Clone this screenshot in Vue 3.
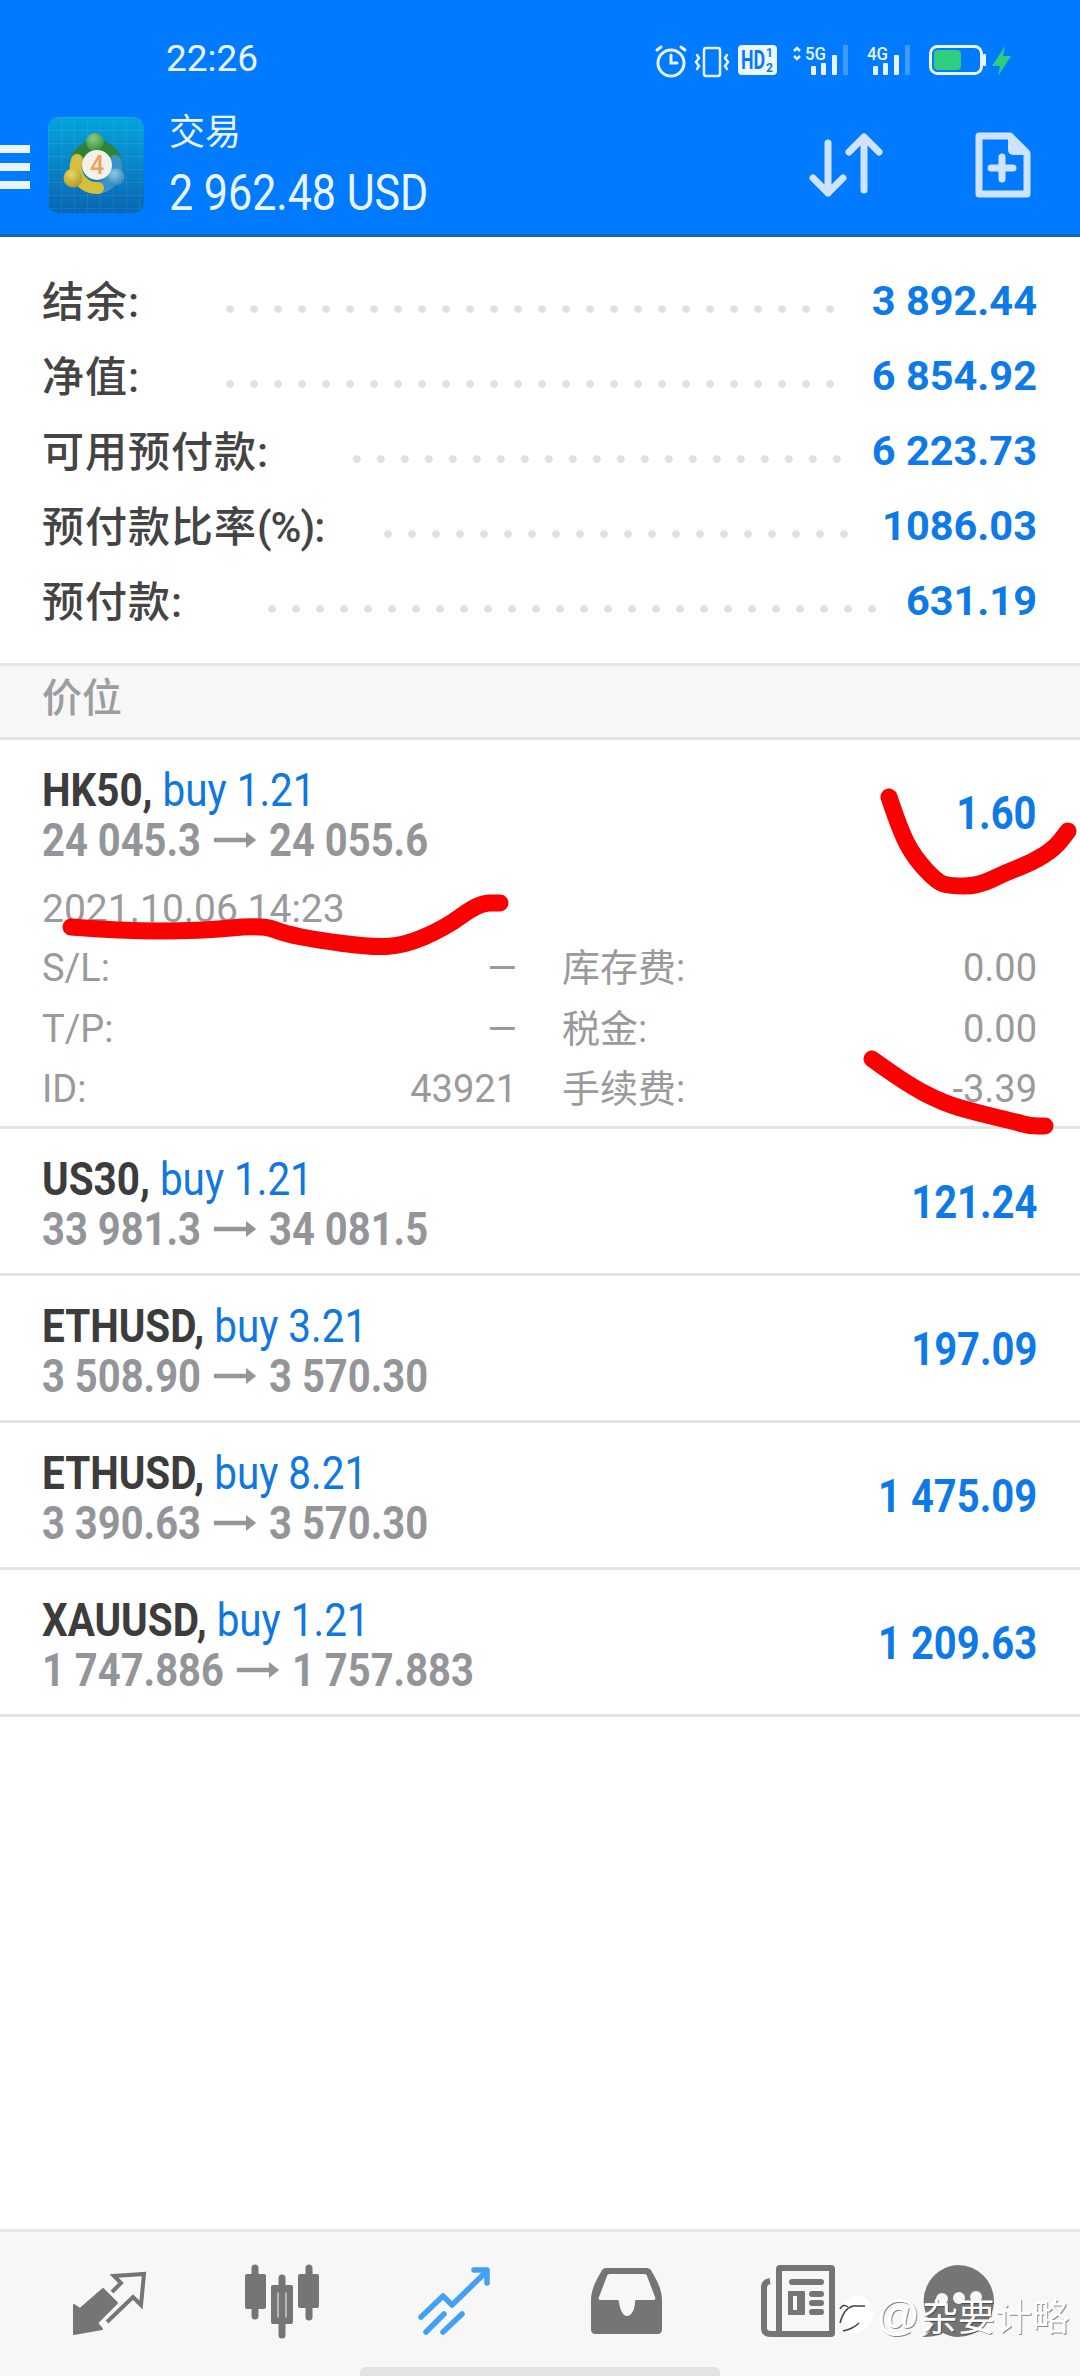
<template>
  <div class="page">
    <header class="head">
      <div class="status">
        <span class="time">22:26</span>
        <svg class="status-icons" width="370" height="50" viewBox="650 33 370 50">
          <!-- alarm -->
          <g fill="none" stroke="#e8f3ff" stroke-width="3" stroke-linecap="round">
            <circle cx="671" cy="62" r="13" />
            <path d="M671 54v8h6M657 49l4-3M685 49l-4-3" />
          </g>
          <!-- vibrate -->
          <g fill="none" stroke="#e8f3ff" stroke-width="2.5" stroke-linecap="round">
            <rect x="704" y="47" width="16" height="28" rx="2" />
            <path d="M697 54l2 3-3 4 3 4-2 3M727 54l-2 3 3 4-3 4 2 3" />
          </g>
          <!-- HD 1/2 -->
          <rect x="738" y="44" width="39" height="30" rx="4" fill="#eef6ff" />
          <text x="741" y="68" class="hd" textLength="24" lengthAdjust="spacingAndGlyphs">HD</text>
          <text x="766" y="56" class="hd-small">1</text>
          <text x="766" y="71" class="hd-small">2</text>
          <!-- 5G -->
          <path d="M794 50l3-3 3 3M794 55l3 3 3-3" fill="none" stroke="#e8f3ff" stroke-width="2.5" />
          <text x="805" y="59" class="net" textLength="21" lengthAdjust="spacingAndGlyphs">5G</text>
          <g fill="#e8f3ff">
            <rect x="811" y="65" width="5" height="9" rx="1" />
            <rect x="821" y="62" width="5" height="12" rx="1" />
            <rect x="832" y="54" width="5" height="20" rx="1" />
          </g>
          <rect x="843" y="44" width="5" height="30" rx="1" fill="#3f9bff" />
          <!-- 4G -->
          <text x="867" y="59" class="net" textLength="21" lengthAdjust="spacingAndGlyphs">4G</text>
          <g fill="#e8f3ff">
            <rect x="873" y="65" width="5" height="9" rx="1" />
            <rect x="883" y="62" width="5" height="12" rx="1" />
            <rect x="894" y="54" width="5" height="20" rx="1" />
          </g>
          <rect x="905" y="44" width="5" height="30" rx="1" fill="#3f9bff" />
          <!-- battery -->
          <rect x="930.5" y="45.5" width="51" height="27" rx="7" fill="none" stroke="#e8f3ff" stroke-width="3" />
          <rect x="934" y="49" width="27" height="20" rx="4" fill="#2fce7f" />
          <rect x="983" y="53" width="3" height="12" rx="1" fill="#e8f3ff" />
          <path d="M1005 45l-13 20h8l-2 10 13-20h-8z" fill="#2fce7f" />
        </svg>
      </div>
      <div class="appbar">
        <div class="burger"><i></i><i></i><i></i></div>
        <svg class="logo" width="96" height="96" viewBox="0 0 96 96">
          <defs>
            <linearGradient id="logoBg" x1="0" y1="0" x2="0" y2="1">
              <stop offset="0" stop-color="#04a4dc" />
              <stop offset="1" stop-color="#0a66b2" />
            </linearGradient>
            <pattern id="logoGrid" width="13" height="13" patternUnits="userSpaceOnUse">
              <path d="M13 0H0V13" fill="none" stroke="#ffffff" stroke-opacity=".13" />
            </pattern>
            <radialGradient id="headGreen" cx=".4" cy=".3" r=".8">
              <stop offset="0" stop-color="#8ccb7c" />
              <stop offset="1" stop-color="#2f8a3c" />
            </radialGradient>
            <radialGradient id="headYellow" cx=".4" cy=".3" r=".8">
              <stop offset="0" stop-color="#e9d765" />
              <stop offset="1" stop-color="#a8931f" />
            </radialGradient>
            <radialGradient id="headBlue" cx=".4" cy=".3" r=".8">
              <stop offset="0" stop-color="#8cc8e6" />
              <stop offset="1" stop-color="#2a7fb4" />
            </radialGradient>
          </defs>
          <rect width="96" height="96" rx="10" fill="url(#logoBg)" />
          <rect width="96" height="96" rx="10" fill="url(#logoGrid)" />
          <g fill="none" stroke-width="12" stroke-linecap="round">
            <path d="M67 41A21 21 0 0 0 29 41" stroke="#2f8238" />
            <path d="M67 44A21 21 0 0 1 45 71" stroke="#3a93c6" />
            <path d="M29 43A21 21 0 0 0 50 71" stroke="#d5c03c" />
          </g>
          <circle cx="47" cy="25" r="9" fill="url(#headGreen)" />
          <circle cx="25" cy="61" r="9.500" fill="url(#headYellow)" />
          <circle cx="68" cy="60" r="8.500" fill="url(#headBlue)" />
          <circle cx="49" cy="48" r="15" fill="#f4f1ea" />
          <text x="49" y="57" class="logo-four">4</text>
        </svg>
        <div class="account">
          <div class="account-title">交易</div>
          <div class="account-sum">2 962.48 USD</div>
        </div>
        <svg class="actions" width="240" height="80" viewBox="800 125 240 80">
          <g fill="none" stroke="#cfe3ff" stroke-width="7" stroke-linecap="round" stroke-linejoin="round">
            <path d="M828 143v50M813 178l15 15 15-15" />
            <path d="M864 190v-53M849 152l15-15 15 15" />
            <path d="M979 136h31l17 17v41h-48z" />
            <path d="M1002 157v22M991 168h22" />
          </g>
          <path d="M1008 136l19 19h-14a5 5 0 0 1-5-5z" fill="#cfe3ff" />
        </svg>
      </div>
    </header>

    <section class="summary">
      <div v-for="row in summary" :key="row.label" class="sum-row">
        <span class="sum-label" :style="{ width: row.labelWidth + 'px' }">{{ row.label }}<span v-if="row.unit" class="sum-unit">{{ row.unit }}</span></span>
        <span class="dots" :style="{ width: row.dots * 24 + 'px' }"></span>
        <span class="sum-value">{{ row.value }}</span>
      </div>
    </section>

    <div class="band">价位</div>

    <section class="positions">
      <div v-for="(p, i) in positions" :key="i" class="pos">
        <div class="pos-main">
          <div class="pos-text">
            <div class="pos-title"><b>{{ p.symbol }},</b> <span class="buy">buy {{ p.lots }}</span></div>
            <div class="pos-price">
              <span>{{ p.from }}</span>
              <svg class="arrow" width="50" height="20" viewBox="0 0 50 20">
                <path d="M0 10h40" stroke="#939598" stroke-width="4.500" />
                <path d="M38 2l12 8-12 8z" fill="#939598" />
              </svg>
              <span>{{ p.to }}</span>
            </div>
          </div>
          <div class="pos-profit">{{ p.profit }}</div>
        </div>
        <div v-if="p.open" class="pos-detail">
          <div class="pos-date">{{ p.date }}</div>
          <div class="detail-grid">
            <div v-for="d in p.details" :key="d[0]" class="detail-cell">
              <span>{{ d[0] }}</span><span>{{ d[1] }}</span>
            </div>
          </div>
        </div>
      </div>
    </section>

    <nav class="tabs">
      <div class="tab">
        <svg width="80" height="80" viewBox="0 0 80 80">
          <path d="M4 73V44l6 4 23-20 14 14-20 20 5 6z" fill="#757575" stroke="#757575" stroke-width="2" stroke-linejoin="round" />
          <path d="M42 31l9-9-7-7 30-2-3 31-8-8-26 25" fill="none" stroke="#757575" stroke-width="4" />
        </svg>
      </div>
      <div class="tab">
        <svg width="80" height="80" viewBox="0 0 80 80">
          <g fill="none" stroke="#757575" stroke-width="7" stroke-linecap="round">
            <path d="M13 7v48M40 17v57M67 7v49" />
          </g>
          <rect x="3" y="13" width="21" height="35" rx="2" fill="#757575" />
          <rect x="56" y="13" width="21" height="34" rx="2" fill="#757575" />
          <path fill-rule="evenodd" d="M31 24h18a2 2 0 0 1 2 2v35a2 2 0 0 1-2 2H31a2 2 0 0 1-2-2V26a2 2 0 0 1 2-2zm6 7a1.500 1.500 0 0 0-1.500 1.500v23a1.500 1.500 0 0 0 1.500 1.500h6a1.500 1.500 0 0 0 1.500-1.500v-23A1.500 1.500 0 0 0 43 31z" fill="#757575" />
        </svg>
      </div>
      <div class="tab">
        <svg width="80" height="80" viewBox="0 0 80 80">
          <g fill="none" stroke="#42a0f5" stroke-width="5.500" stroke-linecap="round" stroke-linejoin="round">
            <path d="M7 56l22-21 9 9 34-33" />
            <path d="M60 9h13v13" />
            <path d="M12 71l18-18M29 71l19-18" />
          </g>
        </svg>
      </div>
      <div class="tab">
        <svg width="80" height="80" viewBox="0 0 80 80">
          <path fill-rule="evenodd" d="M20 7h40c3 0 5 1 6 4 5 8 10 18 10 28v30c0 2-2 4-4 4H9c-2 0-4-2-4-4V39c0-10 5-20 10-28 1-3 3-4 5-4zm4 6c-2 0-3 1-3 2l-8 21c-1 2 0 3 2 3h16c1 0 2 0 2 2 1 8 4 14 8 14s8-6 8-14c0-2 1-2 2-2h16c2 0 3-1 2-3l-8-21c0-1-1-2-3-2z" fill="#757575" />
        </svg>
      </div>
      <div class="tab">
        <svg width="80" height="80" viewBox="0 0 80 80">
          <path fill-rule="evenodd" d="M22 4h51a4 4 0 0 1 4 4v64a4 4 0 0 1-4 4H22a4 4 0 0 1-4-4V8a4 4 0 0 1 4-4zm2 6v60h47V10z" fill="#757575" />
          <path d="M12 20q-6 1-6 7v40q0 6 7 6h8" fill="none" stroke="#757575" stroke-width="6" />
          <rect x="31" y="18" width="35" height="6" rx="3" fill="#757575" />
          <path fill-rule="evenodd" d="M31 30h15a1 1 0 0 1 1 1v22a1 1 0 0 1-1 1H31a1 1 0 0 1-1-1V31a1 1 0 0 1 1-1zm4 5v14h4V35z" fill="#757575" />
          <rect x="51" y="30" width="15" height="6" rx="3" fill="#757575" />
          <rect x="51" y="39" width="15" height="6" rx="3" fill="#757575" />
          <rect x="51" y="48" width="15" height="6" rx="3" fill="#757575" />
        </svg>
      </div>
      <div class="tab tab-last">
        <svg width="80" height="80" viewBox="0 0 80 80">
          <path d="M40 4a36 36 0 0 1 0 72c-6 0-11-2-15-4-5 3-13 4-21 4 6-2 9-7 10-13A36 36 0 0 1 40 4z" fill="#757575" />
          <circle cx="24" cy="38" r="6" fill="#f7f7f7" />
          <circle cx="41" cy="37" r="6" fill="#f7f7f7" />
          <circle cx="58" cy="36" r="6" fill="#f7f7f7" />
        </svg>
      </div>
      <div class="home-bar"></div>
    </nav>

    <!-- 手写的红色标记 -->
    <svg class="marks" width="1080" height="2376" viewBox="0 0 1080 2376">
      <path v-for="(d, i) in marks" :key="i" :d="d" fill="none" stroke="#fb0000" stroke-width="17" stroke-linecap="round" stroke-linejoin="round" />
    </svg>

    <div class="watermark">
      <svg width="40" height="44" viewBox="0 0 40 44">
        <path d="M20 4a16 16 0 0 1 12 27c-4 5-10 8-18 9 3-2 5-4 5-7A16 16 0 0 1 20 4z" fill="#fff" stroke="#fff" stroke-width="4" />
        <path d="M5 30Q9 15 18 13h12M13 14Q8 10 5 16M8 38Q18 36 24 30" fill="none" stroke="#444" stroke-width="1.500" />
      </svg>
      <span class="wm-at">@</span><span>杂要计略</span>
    </div>
  </div>
</template>

<script setup>
const summary = [
  { label: '结余:', value: '3 892.44', labelWidth: 184, dots: 26 },
  { label: '净值:', value: '6 854.92', labelWidth: 184, dots: 26 },
  { label: '可用预付款:', value: '6 223.73', labelWidth: 311, dots: 21 },
  { label: '预付款比率', unit: '(%):', value: '1086.03', labelWidth: 342, dots: 20 },
  { label: '预付款:', value: '631.19', labelWidth: 226, dots: 26 }
]

const positions = [
  {
    symbol: 'HK50', lots: '1.21', from: '24 045.3', to: '24 055.6', profit: '1.60', open: true,
    date: '2021.10.06 14:23',
    details: [
      ['S/L:', '—'], ['库存费:', '0.00'],
      ['T/P:', '—'], ['税金:', '0.00'],
      ['ID:', '43921'], ['手续费:', '-3.39']
    ]
  },
  { symbol: 'US30', lots: '1.21', from: '33 981.3', to: '34 081.5', profit: '121.24' },
  { symbol: 'ETHUSD', lots: '3.21', from: '3 508.90', to: '3 570.30', profit: '197.09' },
  { symbol: 'ETHUSD', lots: '8.21', from: '3 390.63', to: '3 570.30', profit: '1 475.09' },
  { symbol: 'XAUUSD', lots: '1.21', from: '1 747.886', to: '1 757.883', profit: '1 209.63' }
]

// 折线点转成平滑曲线
const smooth = (pts) => {
  let d = `M${pts[0][0]} ${pts[0][1]}`
  for (let i = 1; i < pts.length - 1; i++) {
    const mx = (pts[i][0] + pts[i + 1][0]) / 2
    const my = (pts[i][1] + pts[i + 1][1]) / 2
    d += ` Q${pts[i][0]} ${pts[i][1]} ${mx} ${my}`
  }
  const last = pts[pts.length - 1]
  return d + ` L${last[0]} ${last[1]}`
}

const marks = [
  [[71, 927], [121, 931], [200, 931], [262, 925], [286, 934], [317, 940], [369, 947], [403, 946], [445, 928], [479, 903], [500, 903]],
  [[889, 797], [900, 830], [914, 857], [937, 882], [950, 886], [978, 886], [1005, 873], [1033, 862], [1055, 848], [1068, 831]],
  [[872, 1059], [905, 1083], [943, 1103], [978, 1113], [1016, 1122], [1030, 1126], [1045, 1126]]
].map(smooth)
</script>

<style>
html,
body {
  margin: 0;
  background: #fff;
}
</style>

<style scoped>
.page {
  position: relative;
  width: 1080px;
  height: 2376px;
  overflow: hidden;
  display: flex;
  flex-direction: column;
  background: #fff;
  font-family: Roboto, "Noto Sans CJK SC", sans-serif;
}

.head {
  background: #007aff;
  border-bottom: 3px solid #1467ac;
  color: #eaf4ff;
}
.status {
  height: 117px;
  display: flex;
  align-items: center;
  padding: 0 60px 0 166px;
  justify-content: space-between;
}
.time {
  font-size: 37px;
}
.hd {
  font: 700 25px Roboto, sans-serif;
  fill: #007aff;
}
.hd-small {
  font: 700 12px Roboto, sans-serif;
  fill: #007aff;
}
.net {
  font: 500 19px Roboto, sans-serif;
  fill: #e8f3ff;
}
.appbar {
  height: 117px;
  display: flex;
  align-items: flex-start;
}
.burger {
  width: 30px;
  margin: 28px 18px 0 0;
  display: flex;
  flex-direction: column;
  gap: 10px;
}
.burger i {
  display: block;
  height: 8px;
  background: #eaf4ff;
}
.logo-four {
  font: 500 25px Roboto, sans-serif;
  fill: #eda35a;
  text-anchor: middle;
}
.account {
  margin-left: 25px;
}
.account-title {
  font-size: 36px;
  line-height: 36px;
  margin-top: -2px;
}
.account-sum {
  font-size: 50px;
  line-height: 60px;
  margin-top: 12px;
  white-space: nowrap;
  transform: scaleX(0.86);
  transform-origin: left;
}
.actions {
  margin: 8px 40px 0 auto;
}

.summary {
  padding: 26px 43px 25px 42px;
  border-bottom: 3px solid #e4e4e4;
}
.sum-row {
  height: 75px;
  display: flex;
  align-items: center;
}
.sum-label {
  flex: none;
  font-size: 42px;
  letter-spacing: 1px;
  font-weight: 500;
  color: #444;
  margin-top: -5px;
  white-space: nowrap;
}
.sum-unit {
  letter-spacing: -1px;
}
.dots {
  height: 8px;
  margin-top: 16px;
  background: radial-gradient(circle at 4px 4px, #e0e0e0 3.500px, transparent 4px) left / 24px 8px repeat-x;
}
.sum-value {
  margin-left: auto;
  font-size: 41.500px;
  font-weight: 700;
  color: #0d7ae8;
  white-space: nowrap;
}

.band {
  height: 71px;
  padding: 0 42px;
  background: #f7f7f7;
  border-bottom: 3px solid #e4e4e4;
  font-size: 40px;
  line-height: 66px;
  font-weight: 500;
  color: #9c9d9f;
}

.pos {
  border-bottom: 3px solid #e4e4e4;
  padding: 0 43px 0 42px;
}
.pos-main {
  height: 144px;
  box-sizing: border-box;
  padding-top: 5px;
  display: flex;
  align-items: center;
  justify-content: space-between;
}
.pos-text {
  white-space: nowrap;
  transform-origin: left;
}
.pos-title,
.pos-price {
  font-size: 47px;
  line-height: 50px;
  transform-origin: left;
}
.pos-title {
  transform: scaleX(0.86);
}
.pos-title b {
  font-weight: 700;
  color: #3c3c3c;
}
.buy {
  color: #1077e0;
}
.pos-price {
  display: flex;
  align-items: center;
  font-weight: 700;
  color: #939598;
  transform: scaleX(0.85);
}
.arrow {
  flex: none;
  margin: 0 15px 0 15px;
}
.pos-profit {
  font-size: 47px;
  font-weight: 700;
  color: #0d7ae8;
  white-space: nowrap;
  margin-bottom: 4px;
  transform: scaleX(0.85);
  transform-origin: right;
}
.pos-detail {
  margin-top: 3px;
  height: 239px;
  color: #9a9a9a;
  font-size: 38px;
}
.pos-date {
  line-height: 40px;
  padding-top: 2px;
  margin-bottom: 19px;
  font-size: 39px;
}
.detail-grid {
  display: grid;
  grid-template-columns: 475px 475px;
  column-gap: 45px;
  row-gap: 20.500px;
}
.detail-cell {
  display: flex;
  justify-content: space-between;
  line-height: 40px;
}

.tabs {
  position: relative;
  margin-top: auto;
  height: 147px;
  box-sizing: border-box;
  padding: 29px 0 0 24px;
  display: flex;
  background: #f7f7f7;
  border-top: 3px solid #e6e6e6;
}
.tab {
  width: 172px;
  display: flex;
  justify-content: center;
  align-items: flex-start;
}
.tab-last {
  margin-left: -12px;
}
.home-bar {
  position: absolute;
  left: 360px;
  right: 360px;
  bottom: 0;
  height: 9px;
  border-radius: 6px 6px 0 0;
  background: #e3e3e3;
}

.marks {
  position: absolute;
  left: 0;
  top: 0;
  pointer-events: none;
}
.watermark {
  position: absolute;
  right: 11px;
  top: 2288px;
  display: flex;
  align-items: center;
  gap: 1px;
  color: #fff;
  font-size: 37px;
  text-shadow: 1px 1px 0 rgba(40, 40, 40, 0.55);
}
.wm-at {
  font-size: 43px;
  font-family: "Liberation Sans", sans-serif;
}
</style>
